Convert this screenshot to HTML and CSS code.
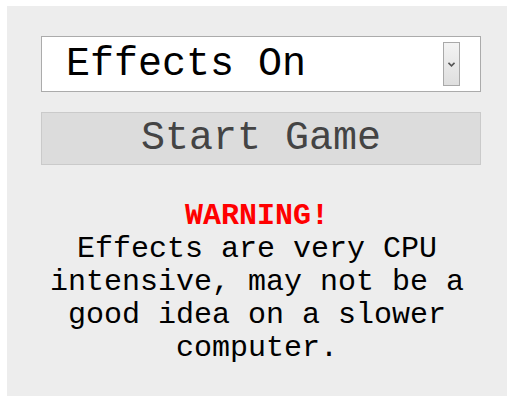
FILE: index.html
```html
<!DOCTYPE html>
<html>
<head>
<meta charset="utf-8">
<link rel="stylesheet" href="styles.css">
</head>
<body>
<div class="panel">
  <div class="controls">
    <div class="select">
      <span class="select-label">Effects On</span>
      <span class="select-arrow">
        <svg width="7" height="5" viewBox="0 0 7 5"><path d="M0.5 0.8 L3.5 3.8 L6.5 0.8" fill="none" stroke="#555" stroke-width="1.6"/></svg>
      </span>
    </div>
    <button class="start">Start Game</button>
  </div>
  <div class="notice">
    <div class="warning">WARNING!</div>
    <div class="message">Effects are very CPU intensive, may not be a good idea on a slower computer.</div>
  </div>
</div>
</body>
</html>
```
FILE: styles.css
```css
html, body {
  margin: 0;
  padding: 0;
  background: #ffffff;
}
body {
  padding: 6px 10px 11px 7px;
  font-family: "Courier New", "Liberation Mono", monospace;
}
.panel {
  width: 500px;
  height: 390px;
  box-sizing: border-box;
  background: #ededed;
  padding-top: 30px;
}
.controls {
  margin-left: 34px;
  width: 440px;
  display: flex;
  flex-direction: column;
  gap: 20px;
}
.select {
  height: 56px;
  box-sizing: border-box;
  border: 1px solid #ababab;
  background: #ffffff;
  display: flex;
  align-items: center;
  padding-left: 24px;
  padding-right: 20px;
}
.select-label {
  flex: 1;
  font-size: 40px;
  color: #000;
  line-height: 1;
  padding-top: 2px;
}
.select-arrow {
  width: 17px;
  height: 44px;
  box-sizing: border-box;
  border: 1px solid #a9a9a9;
  background: linear-gradient(#f3f3f3, #dedede);
  display: flex;
  align-items: center;
  justify-content: center;
}
.select-arrow svg {
  display: block;
  margin-top: 1px;
}
.start {
  height: 53px;
  box-sizing: border-box;
  border: 1px solid #cacaca;
  background: #dcdcdc;
  color: #444;
  font-family: "Courier New", "Liberation Mono", monospace;
  font-size: 40px;
  padding: 0;
  line-height: 1;
}
.notice {
  margin-top: 35px;
  padding: 0 30px;
  text-align: center;
  font-size: 30px;
  line-height: 33px;
  color: #000;
}
.warning {
  color: #ff0000;
  font-weight: bold;
}
```
